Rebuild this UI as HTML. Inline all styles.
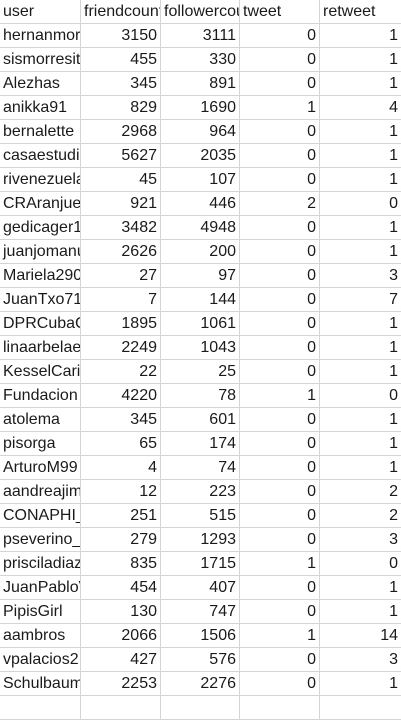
<!DOCTYPE html>
<html><head><meta charset="utf-8"><style>
body{margin:0;background:#fff;width:401px;height:699px;overflow:hidden;position:relative;font-family:"Liberation Sans",sans-serif;font-size:16px;color:#1a1a1a}
.r{position:absolute;left:0;width:401px;height:24px;border-bottom:1px solid #d4d4d4;box-sizing:border-box}
.r div{position:absolute;top:0;height:23px;line-height:24px;overflow:hidden;white-space:nowrap;box-sizing:border-box;border-right:1px solid #d4d4d4;padding:0 3px}
.a{left:0;width:81px}.b{left:81px;width:80px;text-align:right}.c{left:161px;width:79px;text-align:right}.d{left:240px;width:80px;text-align:right}.e{left:320px;width:81px;text-align:right;border-right:none!important}
.h div{text-align:left}
</style></head><body>
<div class="r h" style="top:0"><div class="a">user</div><div class="b">friendcount</div><div class="c">followercount</div><div class="d">tweet</div><div class="e" style="text-align:left">retweet</div></div>
<div class="r" style="top:24px"><div class="a">hernanmoreno</div><div class="b">3150</div><div class="c">3111</div><div class="d">0</div><div class="e">1</div></div>
<div class="r" style="top:48px"><div class="a">sismorresitio</div><div class="b">455</div><div class="c">330</div><div class="d">0</div><div class="e">1</div></div>
<div class="r" style="top:72px"><div class="a">Alezhas</div><div class="b">345</div><div class="c">891</div><div class="d">0</div><div class="e">1</div></div>
<div class="r" style="top:96px"><div class="a">anikka91</div><div class="b">829</div><div class="c">1690</div><div class="d">1</div><div class="e">4</div></div>
<div class="r" style="top:120px"><div class="a">bernalette</div><div class="b">2968</div><div class="c">964</div><div class="d">0</div><div class="e">1</div></div>
<div class="r" style="top:144px"><div class="a">casaestudio</div><div class="b">5627</div><div class="c">2035</div><div class="d">0</div><div class="e">1</div></div>
<div class="r" style="top:168px"><div class="a">rivenezuela</div><div class="b">45</div><div class="c">107</div><div class="d">0</div><div class="e">1</div></div>
<div class="r" style="top:192px"><div class="a">CRAranjuez</div><div class="b">921</div><div class="c">446</div><div class="d">2</div><div class="e">0</div></div>
<div class="r" style="top:216px"><div class="a">gedicager1</div><div class="b">3482</div><div class="c">4948</div><div class="d">0</div><div class="e">1</div></div>
<div class="r" style="top:240px"><div class="a">juanjomanu</div><div class="b">2626</div><div class="c">200</div><div class="d">0</div><div class="e">1</div></div>
<div class="r" style="top:264px"><div class="a">Mariela290</div><div class="b">27</div><div class="c">97</div><div class="d">0</div><div class="e">3</div></div>
<div class="r" style="top:288px"><div class="a">JuanTxo71</div><div class="b">7</div><div class="c">144</div><div class="d">0</div><div class="e">7</div></div>
<div class="r" style="top:312px"><div class="a">DPRCubaCan</div><div class="b">1895</div><div class="c">1061</div><div class="d">0</div><div class="e">1</div></div>
<div class="r" style="top:336px"><div class="a">linaarbelaez</div><div class="b">2249</div><div class="c">1043</div><div class="d">0</div><div class="e">1</div></div>
<div class="r" style="top:360px"><div class="a">KesselCarib</div><div class="b">22</div><div class="c">25</div><div class="d">0</div><div class="e">1</div></div>
<div class="r" style="top:384px"><div class="a">Fundacion</div><div class="b">4220</div><div class="c">78</div><div class="d">1</div><div class="e">0</div></div>
<div class="r" style="top:408px"><div class="a">atolema</div><div class="b">345</div><div class="c">601</div><div class="d">0</div><div class="e">1</div></div>
<div class="r" style="top:432px"><div class="a">pisorga</div><div class="b">65</div><div class="c">174</div><div class="d">0</div><div class="e">1</div></div>
<div class="r" style="top:456px"><div class="a">ArturoM99</div><div class="b">4</div><div class="c">74</div><div class="d">0</div><div class="e">1</div></div>
<div class="r" style="top:480px"><div class="a">aandreajim</div><div class="b">12</div><div class="c">223</div><div class="d">0</div><div class="e">2</div></div>
<div class="r" style="top:504px"><div class="a">CONAPHI_</div><div class="b">251</div><div class="c">515</div><div class="d">0</div><div class="e">2</div></div>
<div class="r" style="top:528px"><div class="a">pseverino_</div><div class="b">279</div><div class="c">1293</div><div class="d">0</div><div class="e">3</div></div>
<div class="r" style="top:552px"><div class="a">prisciladiaz</div><div class="b">835</div><div class="c">1715</div><div class="d">1</div><div class="e">0</div></div>
<div class="r" style="top:576px"><div class="a">JuanPabloV</div><div class="b">454</div><div class="c">407</div><div class="d">0</div><div class="e">1</div></div>
<div class="r" style="top:600px"><div class="a">PipisGirl</div><div class="b">130</div><div class="c">747</div><div class="d">0</div><div class="e">1</div></div>
<div class="r" style="top:624px"><div class="a">aambros</div><div class="b">2066</div><div class="c">1506</div><div class="d">1</div><div class="e">14</div></div>
<div class="r" style="top:648px"><div class="a">vpalacios2</div><div class="b">427</div><div class="c">576</div><div class="d">0</div><div class="e">3</div></div>
<div class="r" style="top:672px"><div class="a">Schulbaum</div><div class="b">2253</div><div class="c">2276</div><div class="d">0</div><div class="e">1</div></div>
<div class="r" style="top:696px"><div class="a"></div><div class="b"></div><div class="c"></div><div class="d"></div><div class="e"></div></div>
</body></html>
